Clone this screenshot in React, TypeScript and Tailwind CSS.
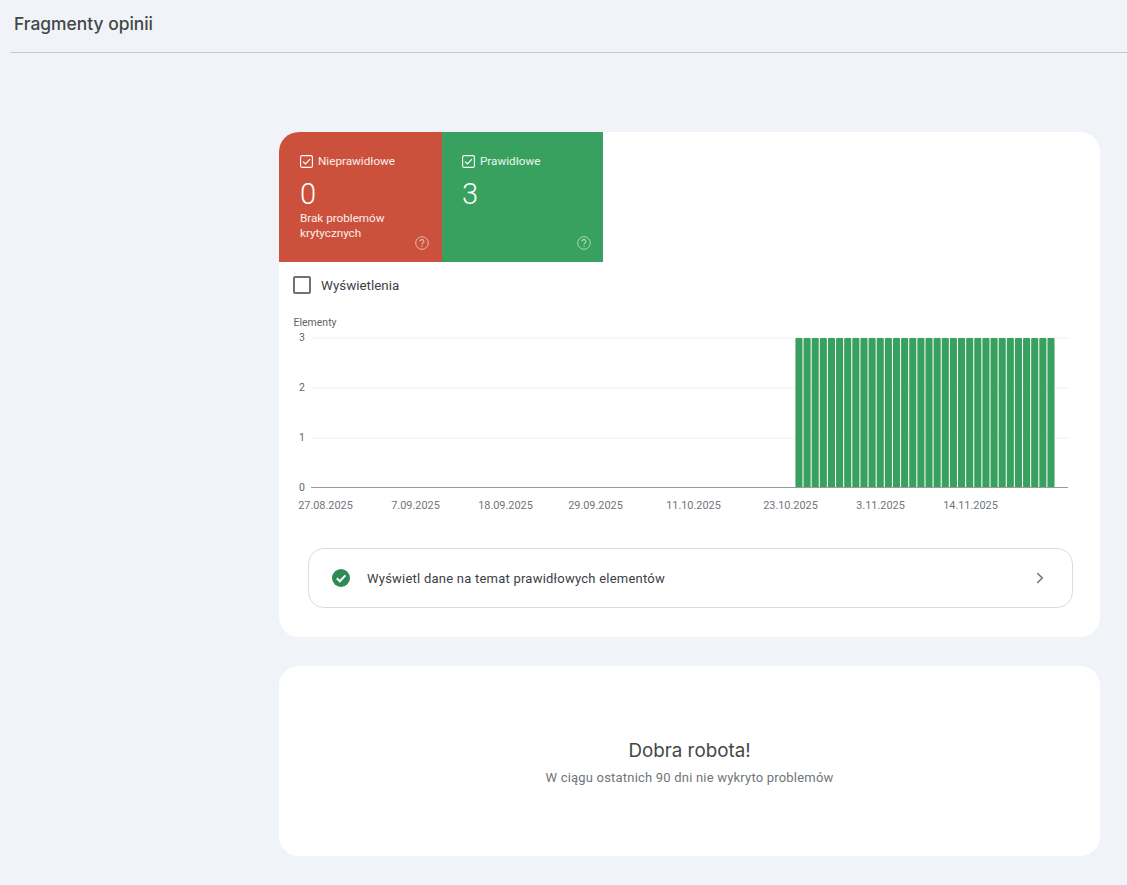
import { ChevronRight } from "lucide-react";

const bars = Array.from({ length: 32 }, (_, i) => 795.4 + i * 8.13);
const gridY = [
  { y: 338, label: "3" },
  { y: 388, label: "2" },
  { y: 438, label: "1" },
];
const dates = [
  { x: 325.5, label: "27.08.2025" },
  { x: 415.5, label: "7.09.2025" },
  { x: 505.5, label: "18.09.2025" },
  { x: 595.5, label: "29.09.2025" },
  { x: 693.5, label: "11.10.2025" },
  { x: 790.5, label: "23.10.2025" },
  { x: 880.5, label: "3.11.2025" },
  { x: 970.5, label: "14.11.2025" },
];

function TileCheck() {
  return (
    <svg width="13" height="13" viewBox="0 0 13 13" className="shrink-0">
      <rect x="0.6" y="0.6" width="11.8" height="11.8" rx="1.5" fill="none" stroke="white" strokeWidth="1.1" />
      <path d="M3 6.6 L5.4 9 L10 4.2" fill="none" stroke="white" strokeWidth="1.2" />
    </svg>
  );
}

function HelpIcon({ right }: { right: string }) {
  return (
    <svg width="14" height="14" viewBox="0 0 14 14" className={`absolute bottom-[12px] opacity-60 ${right}`}>
      <circle cx="7" cy="7" r="6.3" fill="none" stroke="white" strokeWidth="1" />
      <path d="M5 5.5 C5 4.2 6 3.6 7 3.6 C8.1 3.6 9 4.3 9 5.4 C9 6.8 7 6.9 7 8.5" fill="none" stroke="white" strokeWidth="1.1" />
      <circle cx="7" cy="10.2" r="0.7" fill="white" />
    </svg>
  );
}

function Tile({ label, value, note, color, width, rounded }: { label: string; value: string; note?: string; color: string; width: string; rounded?: boolean }) {
  return (
    <div className={`relative h-[130px] pt-[22px] text-white ${color} ${width} ${rounded ? "rounded-tl-[20px] pl-[21px]" : "pl-[20px]"}`}>
      <div className="flex items-center gap-[5px] text-[11.7px] leading-[14px] text-white/90">
        <TileCheck />
        <span>{label}</span>
      </div>
      <div className="mt-[8px] text-[29px] leading-[36px] font-light">{value}</div>
      {note && <div className="mt-[-1px] text-[11.7px] leading-[15px] text-white/90 w-[110px]">{note}</div>}
      <HelpIcon right={rounded ? "right-[13px]" : "right-[12px]"} />
    </div>
  );
}

function Chart() {
  return (
    <svg width="821" height="210" viewBox="279 310 821 210" className="block" style={{ fontFamily: "Roboto, sans-serif" }}>
      <text x="293.5" y="326" fontSize="10.5" fill="#5f6368">Elementy</text>
      {gridY.map((g) => (
        <g key={g.y}>
          <line x1="312" x2="1068" y1={g.y} y2={g.y} stroke="#f0f0f2" strokeWidth="1" />
          <text x="299" y={g.y + 3} fontSize="10.5" fill="#5f6368">{g.label}</text>
        </g>
      ))}
      {bars.map((x) => (
        <rect key={x} x={x} y="338" width="7.1" height="149.5" rx="1" fill="#38a15f" />
      ))}
      <line x1="311" x2="1068" y1="487.5" y2="487.5" stroke="#9a9a9a" strokeWidth="1" />
      <text x="299" y="491" fontSize="10.5" fill="#5f6368">0</text>
      {dates.map((d) => (
        <text key={d.label} x={d.x} y="509" fontSize="10.9" fill="#70757a" textAnchor="middle">{d.label}</text>
      ))}
    </svg>
  );
}

export default function App() {
  return (
    <div className="min-h-[885px] bg-[#f0f4f9] overflow-hidden font-['Roboto',sans-serif]">
      <div className="ml-[10px] h-[53px] border-b border-[#c4c7c5] pl-[4px] pt-[12px] font-['Inter',sans-serif] text-[17.4px] leading-[24px] font-medium text-[#444746]">
        Fragmenty opinii
      </div>

      <div className="ml-[279px] mt-[79px] w-[821px]">
        <div className="h-[505px] rounded-[20px] bg-white">
          <div className="flex">
            <Tile label="Nieprawidłowe" value="0" note="Brak problemów krytycznych" color="bg-[#cb513c]" width="w-[163px]" rounded />
            <Tile label="Prawidłowe" value="3" color="bg-[#38a15f]" width="w-[161px]" />
          </div>
          <div className="flex h-[48px] items-center pl-[14px] pb-[2px]">
            <div className="h-[18px] w-[18px] rounded-[2px] border-2 border-[#6f7274]" />
            <span className="ml-[10px] pt-[2px] text-[13.4px] text-[#3c4043]">Wyświetlenia</span>
          </div>
          <Chart />
          <div className="ml-[29px] mt-[28px] flex h-[60px] w-[765px] items-center rounded-[16px] border border-[#d5e0de] pl-[23px] pr-[23px]">
            <svg width="18" height="18" viewBox="0 0 18 18" className="shrink-0">
              <circle cx="9" cy="9" r="9" fill="#2e8b57" />
              <path d="M4.8 9.2 L7.8 12.2 L13.4 6.4" fill="none" stroke="white" strokeWidth="2" />
            </svg>
            <span className="ml-[17px] pt-[1px] text-[13px] tracking-[0.23px] text-[#3c4043]">Wyświetl dane na temat prawidłowych elementów</span>
            <ChevronRight className="ml-auto text-[#6f7274]" size={18} strokeWidth={2} />
          </div>
        </div>

        <div className="mt-[29px] flex h-[190px] flex-col items-center justify-center rounded-[20px] bg-white pt-[4px]">
          <div className="font-['Inter',sans-serif] text-[18.8px] leading-[24px] text-[#444746]">Dobra robota!</div>
          <div className="mt-[6px] text-[13px] leading-[18px] tracking-[0.2px] text-[#70757a]">W ciągu ostatnich 90 dni nie wykryto problemów</div>
        </div>
      </div>
    </div>
  );
}
